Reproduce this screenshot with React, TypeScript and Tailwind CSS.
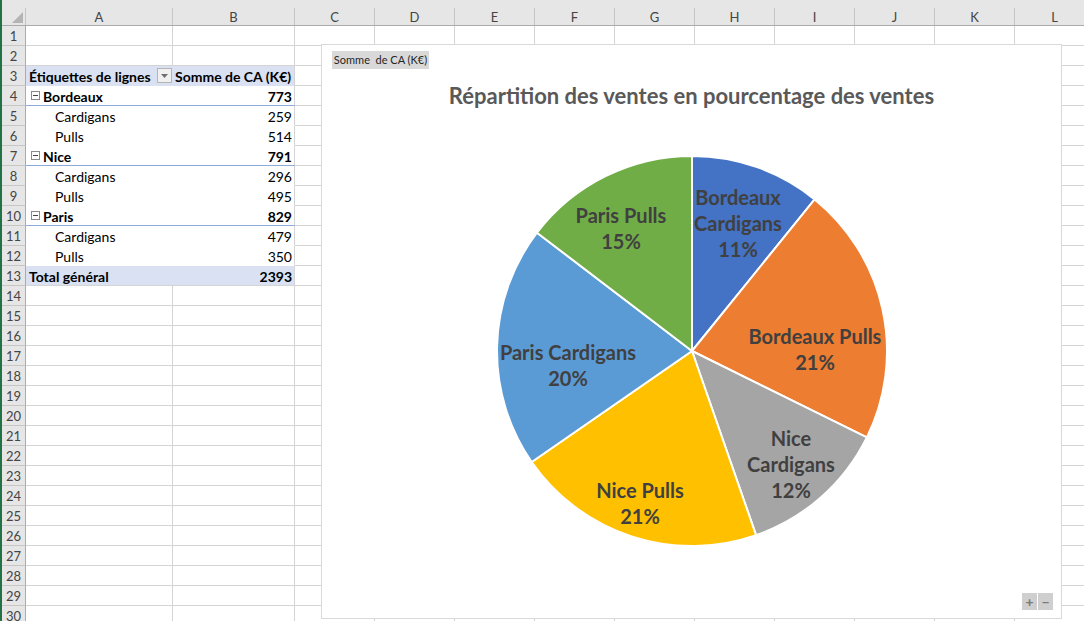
import React from 'react';

// Spreadsheet column layout (px widths)
const columns = [
  { id: 'A', w: 147 },
  { id: 'B', w: 122 },
  { id: 'C', w: 80 },
  { id: 'D', w: 80 },
  { id: 'E', w: 80 },
  { id: 'F', w: 80 },
  { id: 'G', w: 80 },
  { id: 'H', w: 80 },
  { id: 'I', w: 80 },
  { id: 'J', w: 80 },
  { id: 'K', w: 80 },
  { id: 'L', w: 80 },
];

type PivotRow = {
  kind: 'header' | 'group' | 'item' | 'total';
  label: string;
  value: string;
};

const pivot: Record<number, PivotRow> = {
  3: { kind: 'header', label: 'Étiquettes de lignes', value: 'Somme de CA (K€)' },
  4: { kind: 'group', label: 'Bordeaux', value: '773' },
  5: { kind: 'item', label: 'Cardigans', value: '259' },
  6: { kind: 'item', label: 'Pulls', value: '514' },
  7: { kind: 'group', label: 'Nice', value: '791' },
  8: { kind: 'item', label: 'Cardigans', value: '296' },
  9: { kind: 'item', label: 'Pulls', value: '495' },
  10: { kind: 'group', label: 'Paris', value: '829' },
  11: { kind: 'item', label: 'Cardigans', value: '479' },
  12: { kind: 'item', label: 'Pulls', value: '350' },
  13: { kind: 'total', label: 'Total général', value: '2393' },
};

const slices = [
  { name: 'Bordeaux Cardigans', value: 259, color: '#4472C4', lines: ['Bordeaux', 'Cardigans', '11%'], x: 246, y: 46 },
  { name: 'Bordeaux Pulls', value: 514, color: '#ED7D31', lines: ['Bordeaux Pulls', '21%'], x: 323, y: 185 },
  { name: 'Nice Cardigans', value: 296, color: '#A5A5A5', lines: ['Nice', 'Cardigans', '12%'], x: 299, y: 287 },
  { name: 'Nice Pulls', value: 495, color: '#FFC000', lines: ['Nice Pulls', '21%'], x: 148, y: 339 },
  { name: 'Paris Cardigans', value: 479, color: '#5B9BD5', lines: ['Paris Cardigans', '20%'], x: 76, y: 201 },
  { name: 'Paris Pulls', value: 350, color: '#70AD47', lines: ['Paris Pulls', '15%'], x: 129, y: 64 },
];

function MinusBox() {
  return (
    <span className="relative mr-[3px] inline-block h-[9px] w-[9px] border border-[#8a8a8a] bg-white">
      <span className="absolute left-[1px] top-[3px] h-[1px] w-[5px] bg-[#444]" />
    </span>
  );
}

function FilterButton() {
  return (
    <span className="flex h-[15px] w-[15px] items-center justify-center border border-[#b4b4b4] bg-[#f0f0f0]">
      <svg width="7" height="4" viewBox="0 0 7 4">
        <polygon points="0,0 7,0 3.5,4" fill="#707070" />
      </svg>
    </span>
  );
}

function PivotCells({ row }: { row: PivotRow }) {
  const bold = row.kind !== 'item';
  const fill = row.kind === 'header' || row.kind === 'total' ? 'bg-[#d9e1f2]' : 'bg-white';
  const bottom =
    row.kind === 'group'
      ? 'border-b-[#8ea9db]'
      : row.kind === 'header'
        ? 'border-b-[#d9e1f2]'
        : row.kind === 'total'
          ? 'border-b-[#d4d4d4]'
          : 'border-b-white';
  return (
    <>
      <div
        className={`flex h-full w-[147px] shrink-0 items-center border-b pt-[2px] ${bottom} ${fill} ${bold ? 'font-bold' : ''}`}
      >
        {row.kind === 'header' && (
          <div className="flex w-full items-center justify-between pl-[3px] pr-[1px]">
            <span>{row.label}</span>
            <span className="-mt-[2px]">
              <FilterButton />
            </span>
          </div>
        )}
        {row.kind === 'group' && (
          <div className="flex items-center pl-[5px]">
            <span className="-mt-[2px] flex">
              <MinusBox />
            </span>
            <span>{row.label}</span>
          </div>
        )}
        {row.kind === 'item' && <span className="pl-[29px]">{row.label}</span>}
        {row.kind === 'total' && <span className="pl-[3px]">{row.label}</span>}
      </div>
      <div
        className={`flex h-full w-[122px] shrink-0 items-center justify-end border-b border-r border-r-[#d4d4d4] pr-[2px] pt-[2px] ${bottom} ${fill} ${bold ? 'font-bold' : ''}`}
      >
        {row.kind === 'header' ? <span className="w-full pl-[2px] text-left">{row.value}</span> : row.value}
      </div>
    </>
  );
}

function PieChart() {
  const total = slices.reduce((s, x) => s + x.value, 0);
  const cx = 200;
  const cy = 200;
  const r = 195;
  let acc = 0;
  const paths = slices.map((s) => {
    const a0 = (acc / total) * Math.PI * 2 - Math.PI / 2;
    acc += s.value;
    const a1 = (acc / total) * Math.PI * 2 - Math.PI / 2;
    const x0 = cx + r * Math.cos(a0);
    const y0 = cy + r * Math.sin(a0);
    const x1 = cx + r * Math.cos(a1);
    const y1 = cy + r * Math.sin(a1);
    const large = a1 - a0 > Math.PI ? 1 : 0;
    return {
      d: `M ${cx} ${cy} L ${x0} ${y0} A ${r} ${r} 0 ${large} 1 ${x1} ${y1} Z`,
      color: s.color,
      name: s.name,
    };
  });

  return (
    <svg width="400" height="400" viewBox="0 0 400 400" className="mt-[41px] shrink-0">
      {paths.map((p) => (
        <path key={p.name} d={p.d} fill={p.color} stroke="#ffffff" strokeWidth="2" strokeLinejoin="round" />
      ))}
      {slices.map((s) => (
        <text key={`label-${s.name}`} textAnchor="middle" fill="#404040" className="text-[20px] font-bold">
          {s.lines.map((line, i) => (
            <tspan key={line} x={s.x} y={s.y + i * 26} dominantBaseline="central">
              {line}
            </tspan>
          ))}
        </text>
      ))}
    </svg>
  );
}

export default function App() {
  const rows = Array.from({ length: 30 }, (_, i) => i + 1);

  return (
    <div className="relative flex h-[621px] w-[1084px] overflow-hidden bg-white font-['Lato',sans-serif] text-[14px] text-black">
      {/* green workbook edge */}
      <div className="w-[2px] shrink-0 bg-[#217346]" />

      <div className="flex min-w-0 flex-1 flex-col">
        <div className="h-[8px] shrink-0 bg-[#e6e6e6]" />

        {/* Column headers */}
        <div className="flex h-[18px] shrink-0 border-b border-[#ababab] bg-[#e6e6e6] pt-[2px] text-[13px] text-[#444]">
          <div className="relative -mt-[2px] w-[24px] shrink-0 border-r border-[#c6c6c6]">
            <svg className="absolute bottom-[2px] right-[2px]" width="11" height="11" viewBox="0 0 11 11">
              <polygon points="11,0 11,11 0,11" fill="#b4b4b4" />
            </svg>
          </div>
          {columns.map((c) => (
            <div
              key={c.id}
              className="-mt-[2px] flex shrink-0 items-center justify-center border-r border-[#c6c6c6] pt-[2px]"
              style={{ width: c.w }}
            >
              {c.id}
            </div>
          ))}
        </div>

        {/* Grid rows */}
        {rows.map((r) => {
          const p = pivot[r];
          return (
            <div key={r} className="flex h-[20px] shrink-0">
              <div className="flex h-full w-[24px] shrink-0 items-center justify-center border-b border-r border-b-[#c6c6c6] border-r-[#ababab] bg-[#e6e6e6] pt-[2px] text-[13px] text-[#444]">
                {r}
              </div>
              {p ? (
                <PivotCells row={p} />
              ) : (
                <>
                  <div className="h-full w-[147px] shrink-0 border-b border-r border-[#d4d4d4]" />
                  <div className="h-full w-[122px] shrink-0 border-b border-r border-[#d4d4d4]" />
                </>
              )}
              {columns.slice(2).map((c) => (
                <div
                  key={c.id}
                  className="h-full shrink-0 border-b border-r border-[#d4d4d4]"
                  style={{ width: c.w }}
                />
              ))}
            </div>
          );
        })}
      </div>

      {/* Floating chart object */}
      <div className="absolute left-[321px] top-[44px] flex h-[575px] w-[741px] flex-col items-center border border-[#d9d9d9] bg-white">
        <div className="absolute left-[10px] top-[6px] flex h-[18px] w-[97px] items-center justify-center bg-[#d9d9d9] text-[11px] text-[#262626]">
          Somme&nbsp; de CA (K€)
        </div>
        <div className="pt-[37px] text-[22px] font-bold leading-[28px] text-[#595959]">
          Répartition des ventes en pourcentage des ventes
        </div>
        <PieChart />
        <div className="absolute bottom-[8px] right-[8px] flex gap-[1px]">
          <div className="flex h-[17px] w-[15px] items-center justify-center bg-[#cfcfcf] text-[14px] font-bold leading-none text-[#7a7a7a]">
            +
          </div>
          <div className="flex h-[17px] w-[15px] items-center justify-center bg-[#cfcfcf] text-[14px] font-bold leading-none text-[#7a7a7a]">
            −
          </div>
        </div>
      </div>
    </div>
  );
}
